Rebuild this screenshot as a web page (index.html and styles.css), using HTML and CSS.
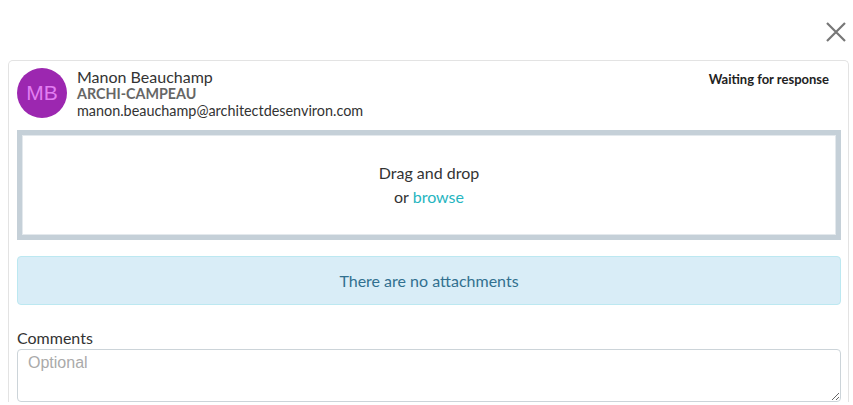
FILE: index.html
```html
<!DOCTYPE html>
<html lang="en">
<head>
    <meta charset="UTF-8">
    <title>Response</title>
    <link rel="stylesheet" href="styles.css">
</head>
<body>
    <div class="modal">
        <div class="modal-top">
            <button class="close-btn" aria-label="Close">
                <svg width="20" height="20" viewBox="0 0 20 20">
                    <path d="M1 1 L19 19 M19 1 L1 19" stroke="#777" stroke-width="2.2" fill="none"/>
                </svg>
            </button>
        </div>

        <div class="card">
            <div class="contact">
                <div class="avatar">MB</div>
                <div class="contact-info">
                    <div class="contact-name">Manon Beauchamp</div>
                    <div class="contact-company">ARCHI-CAMPEAU</div>
                    <div class="contact-email">manon.beauchamp@architectdesenviron.com</div>
                </div>
                <div class="status">Waiting for response</div>
            </div>

            <div class="dropzone">
                <div>Drag and drop</div>
                <div>or <a href="#" class="browse">browse</a></div>
            </div>

            <div class="alert-info">There are no attachments</div>

            <label for="comments" class="field-label">Comments</label>
            <textarea id="comments" placeholder="Optional"></textarea>
        </div>
    </div>
</body>
</html>
```

FILE: styles.css
```css
body {
    margin: 0;
    background-color: #fff;
    font-family: Lato, "Open Sans", sans-serif;
    color: #333;
}
.modal {
    margin: 0 4px 0 8px;
}
.modal-top {
    height: 60px;
    display: flex;
    justify-content: flex-end;
    align-items: flex-start;
}
.close-btn {
    background: none;
    border: none;
    padding: 0;
    margin: 22px 3px 0 0;
    cursor: pointer;
    line-height: 0;
}
.card {
    border: 1px solid #e3e3e3;
    border-bottom: none;
    border-radius: 5px 5px 0 0;
    padding: 7px 7px 0 8px;
}
.contact {
    display: flex;
    align-items: flex-start;
    height: 50px;
}
.avatar {
    width: 50px;
    height: 50px;
    border-radius: 50%;
    background-color: #9c27b0;
    color: #e27ef2;
    font-family: "Liberation Sans", Arial, sans-serif;
    font-size: 21px;
    display: flex;
    align-items: center;
    justify-content: center;
    flex-shrink: 0;
}
.contact-info {
    margin-left: 10px;
    flex: 1;
}
.contact-name {
    font-size: 16px;
    line-height: 17px;
    color: #333;
}
.contact-company {
    font-size: 14.3px;
    font-weight: bold;
    line-height: 17px;
    color: #666;
}
.contact-email {
    font-size: 14.4px;
    line-height: 17px;
    color: #333;
}
.status {
    font-size: 13px;
    font-weight: bold;
    color: #222;
    margin: 3px 12px 0 0;
}
.dropzone {
    margin-top: 12px;
    height: 100px;
    border: 5px solid #c5d0d8;
    box-shadow: inset 0 0 0 1px #e4e9ed;
    display: flex;
    flex-direction: column;
    justify-content: center;
    align-items: center;
    font-size: 16px;
    line-height: 24px;
    color: #333;
}
.browse {
    color: #26b5bf;
    text-decoration: none;
}
.alert-info {
    margin-top: 16px;
    height: 47px;
    background-color: #d9edf7;
    border: 1px solid #bce8f1;
    border-radius: 4px;
    color: #31708f;
    font-size: 16px;
    display: flex;
    align-items: center;
    justify-content: center;
}
.field-label {
    display: block;
    margin-top: 23px;
    font-size: 16px;
    line-height: 20px;
    color: #333;
}
textarea {
    display: block;
    box-sizing: border-box;
    width: 100%;
    height: 53px;
    margin-top: 1px;
    padding: 4px 10px 3px;
    border: 1px solid #ccd4d9;
    border-radius: 4px;
    font-family: "Liberation Sans", Arial, sans-serif;
    font-size: 16px;
    color: #333;
    resize: vertical;
}
textarea::placeholder {
    color: #aaa;
}
```
